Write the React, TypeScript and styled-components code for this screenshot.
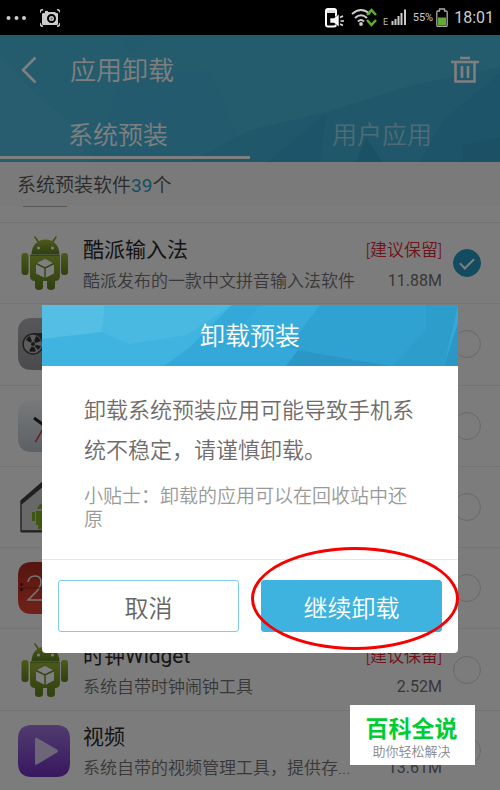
import React from "react";
import styled, { createGlobalStyle } from "styled-components";

const GlobalStyle = createGlobalStyle`
  *, *::before, *::after { box-sizing: border-box; }
  body {
    margin: 0;
    background: #000;
    font-family: Roboto, "Noto Sans CJK SC", sans-serif;
    font-weight: 350;
  }
  button, input { font: inherit; }
  h1, h2, h3, p, ul { margin: 0; padding: 0; font-weight: inherit; }
`;

const Screen = styled.div`
  display: flex;
  flex-direction: column;
  height: 100vh;
  overflow: hidden;
`;

const StatusBar = styled.div`
  display: flex;
  flex: none;
  align-items: center;
  height: 35px;
  padding: 0 6px;
  background: #000;
  color: #ccc;
  svg { display: block; flex: none; }
`;

const StatusIcons = styled.div<{ $end?: boolean }>`
  display: flex;
  align-items: center;
  gap: 14px;
  ${(p) => p.$end && "margin-left: auto; gap: 6px;"}
`;

const Power = styled.span`
  display: flex;
  align-items: center;
  gap: 3px;
  font-size: 11px;
  font-weight: 400;
`;

const Clock = styled.span`
  font-size: 16px;
  line-height: 20px;
  font-weight: 400;
`;

const Stage = styled.div`
  position: relative;
  display: flex;
  flex: 1;
  min-height: 0;
  flex-direction: column;
`;

const Page = styled.main`
  display: flex;
  flex: 1;
  min-height: 0;
  flex-direction: column;
  background: #f9f9f9;
`;

const Header = styled.header`
  position: relative;
  flex: none;
  background: #48bce2;
`;

const Facets = styled.svg`
  position: absolute;
  inset: 0;
  width: 100%;
  height: 100%;
`;

const TitleBar = styled.div`
  position: relative;
  display: flex;
  align-items: center;
  height: 70px;
  padding: 0 20px 0 18px;
  color: #fff;
`;

const PageTitle = styled.h1`
  flex: 1;
  padding: 2px 0 0 28px;
  font-size: 26px;
  line-height: 36px;
`;

const IconButton = styled.button`
  display: flex;
  padding: 0;
  border: 0;
  background: none;
  color: inherit;
`;

const Tabs = styled.div`
  position: relative;
  display: flex;
  height: 57px;
`;

const Tab = styled.button<{ $active?: boolean }>`
  display: flex;
  flex: 1;
  flex-direction: column;
  padding: 5px 0 3px;
  border: 0;
  background: none;
  color: ${(p) => (p.$active ? "#fff" : "rgba(255,255,255,.5)")};
  font-size: 25px;
  span {
    display: flex;
    flex: 1;
    align-items: center;
    align-self: center;
    padding-${(p) => (p.$active ? "right" : "left")}: 14px;
  }
  &::after {
    content: "";
    align-self: stretch;
    height: 3px;
    background: ${(p) => (p.$active ? "#fff" : "transparent")};
  }
`;

const Summary = styled.p`
  flex: none;
  height: 44px;
  padding-left: 17px;
  background: #f4f4f4;
  color: #555;
  font-size: 19px;
  line-height: 48px;
  em { color: #2b9cc4; font-style: normal; font-weight: 400; }
`;

const ScrolledRow = styled.div`
  flex: none;
  height: 17px;
  padding-left: 23px;
  border-bottom: 1px solid #e8e8e8;
  &::before {
    content: "";
    display: block;
    width: 44px;
    height: 1px;
    background: #b0b0b0;
  }
`;

const List = styled.ul`
  display: flex;
  flex: 1;
  flex-direction: column;
  margin-bottom: -2px;
  list-style: none;
`;

const Row = styled.li`
  display: flex;
  flex: 1;
  align-items: center;
  padding: 0 19px 0 18px;
  border-bottom: 1px solid #e8e8e8;
`;

const AppIcon = styled.svg`
  flex: none;
  width: 52px;
  height: 56px;
`;

const RowText = styled.label`
  display: grid;
  flex: 1;
  grid-template-columns: 1fr auto;
  align-items: center;
  row-gap: 4px;
  min-width: 0;
  padding: 3px 11px 0 13px;
`;

const AppName = styled.span`
  color: #2a2a2a;
  font-size: 21px;
  font-weight: 400;
  line-height: 28px;
`;

const Keep = styled.span`
  color: #e02838;
  font-size: 17px;
  line-height: 26px;
  text-align: right;
`;

const Note = styled.span`
  overflow: hidden;
  color: #707070;
  font-size: 17px;
  line-height: 26px;
  text-overflow: ellipsis;
  white-space: nowrap;
`;

const Size = styled(Note)`
  text-align: right;
  font-size: 16px;
  font-weight: 400;
`;

const Tick = styled.input`
  display: grid;
  flex: none;
  place-items: center;
  width: 28px;
  height: 28px;
  margin: 0;
  appearance: none;
  border: 1px solid #d2d2d2;
  border-radius: 50%;
  &:checked { border-color: #2798c2; background: #2798c2; }
  &:checked::before {
    content: "";
    width: 14px;
    height: 8px;
    margin-bottom: 3px;
    border: solid #fff;
    border-width: 0 0 2px 2px;
    transform: rotate(-45deg);
  }
`;

const Shade = styled.div`
  position: absolute;
  inset: 0;
  padding: 270px 42px 0;
  background: rgba(0, 0, 0, 0.5);
`;

const Dialog = styled.section`
  border-radius: 0 0 4px 4px;
  background: #fff;
`;

const DialogHeader = styled.header`
  position: relative;
  height: 61px;
  background: #3eb3e0;
`;

const DialogTitle = styled.h2`
  position: relative;
  color: #fff;
  font-size: 25px;
  line-height: 64px;
  text-align: center;
`;

const DialogBody = styled.div`
  padding: 25px 40px 28px 42px;
  border-bottom: 1px solid #e6e6e6;
`;

const Message = styled.p`
  color: #706c6c;
  font-size: 22px;
  line-height: 40px;
`;

const Tip = styled.p`
  margin-top: 14px;
  color: #999;
  font-size: 19px;
  line-height: 23px;
`;

const Actions = styled.footer`
  display: flex;
  gap: 22px;
  padding: 20px 16px 21px;
`;

const ActionSlot = styled.div`
  position: relative;
  flex: 1;
`;

const ActionButton = styled.button<{ $primary?: boolean }>`
  display: block;
  width: 100%;
  height: 52px;
  padding: 0;
  border: 1px solid ${(p) => (p.$primary ? "#3eb3e0" : "#7dcdea")};
  border-radius: 3px;
  background: ${(p) => (p.$primary ? "#3eb3e0" : "#fff")};
  color: ${(p) => (p.$primary ? "#fff" : "#666")};
  font-size: 24px;
`;

const Ring = styled.span`
  position: absolute;
  inset: -33px -17px -18px -10px;
  border: 3px solid #f80000;
  border-radius: 50%;
  pointer-events: none;
`;

const Badge = styled.aside`
  position: absolute;
  right: 25px;
  bottom: 25px;
  width: 125px;
  height: 60px;
  padding: 11px 2px 0 0;
  background: #fff;
  text-align: center;
`;

const BadgeName = styled.p`
  color: #00cc33;
  font-size: 23px;
  font-weight: 700;
  line-height: 28px;
`;

const BadgeLine = styled.p`
  color: #888;
  font-size: 13px;
  line-height: 16px;
`;

const Robot = () => (
  <AppIcon viewBox="0 0 52 56" aria-hidden="true">
    <defs>
      <linearGradient id="robot" x1="0" y1="0" x2="0" y2="1">
        <stop offset="0" stopColor="#98b438" />
        <stop offset="1" stopColor="#608020" />
      </linearGradient>
    </defs>
    <path d="M17 2l4 6M38 2l-4 6" stroke="#7f9f28" strokeWidth="1.6" strokeLinecap="round" />
    <g fill="url(#robot)">
      <path d="M13.5 19C14 9.500 20 4.500 27.500 4.500S41 9.500 41.500 19z" />
      <rect x="3.500" y="18" width="7" height="22" rx="3" />
      <rect x="43" y="18" width="7" height="22" rx="3" />
      <path d="M12 20h30v21q0 5-5 5v6q0 3-4 3t-4-3v-6h-4v6q0 3-4 3t-4-3v-6q-5 0-5-5z" />
    </g>
    <path d="M12.500 20h29" stroke="#435c14" strokeWidth="1" />
    <circle cx="20.500" cy="13" r="1.500" fill="#fff" />
    <circle cx="34.500" cy="13" r="1.500" fill="#fff" />
    <path d="M27 24l9 4.500v10L27 43l-9-4.500v-10z" fill="#fff" />
    <path d="M18 28.500l9 4.500 9-4.500M27 33v10" fill="none" stroke="#668820" strokeWidth="1.400" />
  </AppIcon>
);

const tile = "M14 2h24Q52 2 52 16v24Q52 54 38 54H14Q0 54 0 40V16Q0 2 14 2z";

const Reel = () => (
  <AppIcon viewBox="0 0 52 56" aria-hidden="true">
    <defs>
      <linearGradient id="reel" x1="0" y1="0" x2="0" y2="1">
        <stop offset="0" stopColor="#b0b0b4" />
        <stop offset="1" stopColor="#96969c" />
      </linearGradient>
    </defs>
    <path d={tile} fill="url(#reel)" />
    <rect x="15" y="17" width="34" height="12" fill="#444" />
    <circle cx="15" cy="28" r="10" fill="#bbb" stroke="#444" strokeWidth="1.500" />
    <path d="M15 28l-7-4a8 8 0 0 1 4-4zM15 28l3-8a8 8 0 0 1 5 5zM15 28l-4 7a8 8 0 0 0 7 0zM15 28l8 2a8 8 0 0 1-3 4z" fill="#333" />
    <circle cx="15" cy="28" r="2.500" fill="#333" stroke="#bbb" />
  </AppIcon>
);

const ClockFace = () => (
  <AppIcon viewBox="0 0 52 56" aria-hidden="true">
    <defs>
      <linearGradient id="face" x1="0" y1="0" x2="0" y2="1">
        <stop offset="0" stopColor="#f0f2f4" />
        <stop offset="1" stopColor="#b8c2ca" />
      </linearGradient>
    </defs>
    <path d={tile} fill="url(#face)" />
    <path d="M16 20l11 8" stroke="#222" strokeWidth="3" />
    <path d="M17.500 44L27 27" stroke="#cc3030" strokeWidth="1.500" />
  </AppIcon>
);

const Home = () => (
  <AppIcon viewBox="0 0 52 56" aria-hidden="true">
    <path d="M3 22L26 4l23 18v30H3z" fill="#d0d0d0" stroke="#505050" strokeWidth="1.500" />
    <path d="M3 26v-5L26 1l23 20v5L26 7z" fill="#404040" />
    <path d="M3 52.500h46" stroke="#444" strokeWidth="2" />
    <path d="M18 32h16v14H18zM14 33h3v9h-3zM19 30q2-6 7-6t7 6zM20 46h4v4h-4z" fill="#7fac28" />
  </AppIcon>
);

const Calendar = () => (
  <AppIcon viewBox="0 0 52 56" aria-hidden="true">
    <defs>
      <linearGradient id="cal" x1="0" y1="0" x2="0" y2="1">
        <stop offset="0" stopColor="#a82c1c" />
        <stop offset=".5" stopColor="#c83828" />
        <stop offset="1" stopColor="#e04434" />
      </linearGradient>
    </defs>
    <path d={tile} fill="url(#cal)" />
    <path d="M10 22q1-6 7-6t6 6q0 4-4 9L10 40h14" fill="none" stroke="#eee" strokeWidth="1.500" />
    <path d="M0 28h52" stroke="#8c2418" />
    <path d="M3.500 23v10" stroke="#701810" strokeWidth="3" strokeDasharray="3 2" />
  </AppIcon>
);

const Video = () => (
  <AppIcon viewBox="0 0 52 56" aria-hidden="true">
    <defs>
      <linearGradient id="vid" x1="0" y1="0" x2="0" y2="1">
        <stop offset="0" stopColor="#a078dc" />
        <stop offset="1" stopColor="#7030c0" />
      </linearGradient>
    </defs>
    <path d={tile} fill="url(#vid)" />
    <path d="M17 16.500v24q0 2 2 1l20-12q2-1.500 0-3L19 15q-2-1-2 1.500z" fill="#d8ccf0" />
  </AppIcon>
);

type AppEntry = {
  id: string;
  icon: () => React.ReactElement;
  name?: string;
  note?: string;
  size?: string;
  keep?: boolean;
  checked?: boolean;
};

const apps: AppEntry[] = [
  { id: "ime", icon: Robot, name: "酷派输入法", note: "酷派发布的一款中文拼音输入法软件", size: "11.88M", keep: true, checked: true },
  { id: "reel", icon: Reel },
  { id: "clock", icon: ClockFace },
  { id: "home", icon: Home },
  { id: "calendar", icon: Calendar },
  { id: "widget", icon: Robot, name: "时钟Widget", note: "系统自带时钟闹钟工具", size: "2.52M", keep: true },
  { id: "video", icon: Video, name: "视频", note: "系统自带的视频管理工具，提供存...", size: "13.61M" },
];

export default function App() {
  return (
    <Screen>
      <GlobalStyle />
      <StatusBar>
        <StatusIcons>
          <svg width="20" height="6" fill="#ccc">
            <circle cx="2.500" cy="3" r="2" />
            <circle cx="10.500" cy="3" r="2" />
            <circle cx="18" cy="3" r="2" />
          </svg>
          <svg width="20" height="18" viewBox="0 0 20 18">
            <path d="M0 4V3q0-2 3-2.500M17 .5q3 .5 3 3M0 14q0 3 3 3.500M17 17.500q3-.5 3-3.500" fill="none" stroke="#ccc" strokeWidth="1.500" />
            <path d="M4 4h1V2h3v1h7l1 1h1q1 0 1 1v10q0 1-1 1H3q-1 0-1-1V5q0-1 2-1z" fill="#ccc" />
            <circle cx="11.500" cy="9.500" r="3.500" fill="#ccc" stroke="#000" strokeWidth="2" />
            <circle cx="11.500" cy="9.500" r="1.200" fill="#777" />
          </svg>
        </StatusIcons>
        <StatusIcons $end>
          <svg width="20" height="20" viewBox="0 0 20 20">
            <rect x="1" y="1" width="10" height="17.500" rx="2" fill="none" stroke="#fff" strokeWidth="2" />
            <path d="M2 2h8v3H2z" fill="#ddd" />
            <path d="M5 10h4l5-4v13l-5-4H5z" fill="#fff" stroke="#000" strokeWidth=".6" />
            <path d="M15 9.500l3-1.500M15.500 13H19M15 16l3 1.500" stroke="#ddd" strokeWidth="1.500" />
          </svg>
          <svg width="26" height="20" viewBox="0 0 26 20">
            <path d="M1 6q9-8 18 0M4 10q6-5.500 12 0M7 13.500q3-3 6 0" fill="none" stroke="#ccc" strokeWidth="2" />
            <circle cx="10" cy="16" r="1.900" fill="#ccc" />
            <path d="M16 7l4.500-5L25 7M16 12l4.500 5 4.500-5" fill="none" stroke="#5fae34" strokeWidth="2.500" />
          </svg>
          <svg width="24" height="20" viewBox="0 0 24 20">
            <text x="0" y="17" fill="#bbb" fontSize="9" fontWeight="400" fontFamily="Roboto, sans-serif">E</text>
            <path d="M9.500 13v4M12.500 11v6M15.500 8v9M18.500 5v12M22 1.500V17" stroke="#ccc" strokeWidth="2" />
          </svg>
          <Power>
            55%
            <svg width="12" height="20" viewBox="0 0 12 20">
              <path d="M3.500 3V1h5v2H10q1.200 0 1.200 1.200v13q0 1.200-1.200 1.200H2Q.8 18.400.8 17.200v-13Q.8 3 2 3z" fill="none" stroke="#aaa" strokeWidth="1.300" />
              <path d="M2 9.500h8v8H2z" fill="#62a832" />
            </svg>
          </Power>
          <Clock>18:01</Clock>
        </StatusIcons>
      </StatusBar>

      <Stage>
        <Page>
          <Header>
            <Facets viewBox="0 0 500 127" preserveAspectRatio="none" aria-hidden="true">
              <path d="M0 0h500v127H0z" fill="#48b8dc" />
              <path d="M0 22l38 40 34 26 18 39H0z" fill="#50bbde" />
              <path d="M118 0l12 18 25-18zM108 90l10-45 92-10 26 65-24 27h-122z" fill="#46b5da" />
              <path d="M500 32l-87 18-87 27-76 18-60 32h310z" fill="#40afd6" />
              <path d="M326 78l-58 49h52zM500 38l-58 48-22 41h80z" fill="#3ba8d2" />
              <path d="M366 102l-10 25h26zM464 110l-2 17h38v-25z" fill="#36a0ca" />
            </Facets>
            <TitleBar>
              <IconButton aria-label="返回">
                <svg width="24" height="30" viewBox="0 0 24 30">
                  <path d="M17.500 2.500L5 15l12.500 12.500" fill="none" stroke="#fff" strokeWidth="2.600" />
                </svg>
              </IconButton>
              <PageTitle>应用卸载</PageTitle>
              <IconButton aria-label="回收站">
                <svg width="30" height="28" viewBox="0 0 30 28">
                  <path d="M10 2h10M1 6h28M5.500 6v19.500h19V6M12 10v12M18 10v12" fill="none" stroke="#fff" strokeWidth="2.600" />
                </svg>
              </IconButton>
            </TitleBar>
            <Tabs role="tablist">
              <Tab role="tab" aria-selected="true" $active><span>系统预装</span></Tab>
              <Tab role="tab" aria-selected="false"><span>用户应用</span></Tab>
            </Tabs>
          </Header>
          <Summary>系统预装软件<em>39</em>个</Summary>
          <ScrolledRow />
          <List>
            {apps.map(({ id, icon: Icon, name, note, size, keep, checked }) => (
              <Row key={id}>
                <Icon />
                <RowText htmlFor={id}>
                  <AppName>{name}</AppName>
                  <Keep>{keep && "[建议保留]"}</Keep>
                  <Note>{note}</Note>
                  <Size>{size}</Size>
                </RowText>
                <Tick id={id} type="checkbox" defaultChecked={checked} />
              </Row>
            ))}
          </List>
        </Page>

        <Shade>
          <Dialog role="dialog" aria-modal="true" aria-labelledby="dialog-title">
            <DialogHeader>
              <Facets viewBox="0 0 416 61" preserveAspectRatio="none" aria-hidden="true">
                <path d="M0 0h416v61H0z" fill="#40b4e0" />
                <path d="M0 0h63l-3 27L0 34z" fill="#54bee5" />
                <path d="M63 0h127l-45 30-58 9-27-12z" fill="#49b9e2" />
                <path d="M190 0h226v61H122l24-17z" fill="#34a8d8" />
                <path d="M218 0h60l-32 43-48-20z" fill="#37acdb" />
                <path d="M278 0h106v25l-34 36-104-18z" fill="#30a2d1" />
                <path d="M384 0h32l-14 61h-52l34-36z" fill="#2d9dcc" />
                <path d="M416 18l-14 43h14zM256 45l94 16H244z" fill="#2a97c7" />
              </Facets>
              <DialogTitle id="dialog-title">卸载预装</DialogTitle>
            </DialogHeader>
            <DialogBody>
              <Message>卸载系统预装应用可能导致手机系统不稳定，请谨慎卸载。</Message>
              <Tip>小贴士：卸载的应用可以在回收站中还原</Tip>
            </DialogBody>
            <Actions>
              <ActionSlot>
                <ActionButton>取消</ActionButton>
              </ActionSlot>
              <ActionSlot>
                <ActionButton $primary>继续卸载</ActionButton>
                <Ring />
              </ActionSlot>
            </Actions>
          </Dialog>
        </Shade>

        <Badge>
          <BadgeName>百科全说</BadgeName>
          <BadgeLine>助你轻松解决</BadgeLine>
        </Badge>
      </Stage>
    </Screen>
  );
}
